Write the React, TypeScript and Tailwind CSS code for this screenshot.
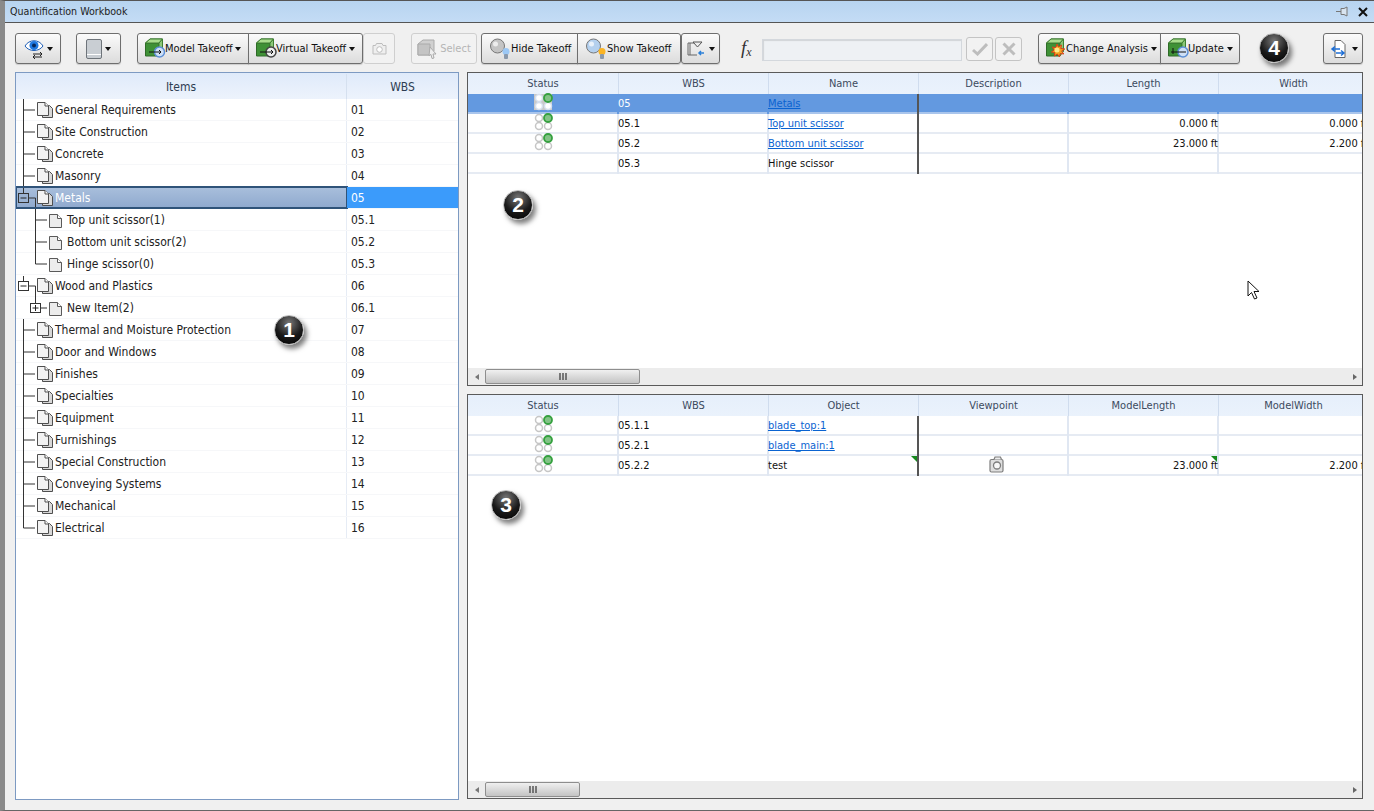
import React from "react";

const Caret = () => <span className="ml-[3px] inline-block h-0 w-0 shrink-0 border-x-[3.5px] border-t-[4px] border-x-transparent border-t-[#111]" />;

const Label = ({ children }: { children: React.ReactNode }) => <span className="mt-[2px] whitespace-nowrap">{children}</span>;

const Doc = ({ x, y, stack }: { x: number; y: number; stack?: boolean }) => (
  <g transform={`translate(${x} ${y})`} stroke="#4f4f4f" strokeWidth="1">
    {stack && <path d="M5.500 3.500H12.500L15.500 6.500V15.500H5.500z" fill="#d8d8d8" />}
    <path d="M.5 .5H8L11.500 4V13.500H.5z" fill="#f3f3f3" />
    <path d="M8 .5V4H11.500" fill="#fff" />
  </g>
);

const DocSingle = ({ x, y }: { x: number; y: number }) => (
  <g transform={`translate(${x} ${y})`} stroke="#5a5a5a" strokeWidth="1">
    <path d="M.5 .5H8.500L12.500 4.500V13.500H.5z" fill="#ececec" />
    <path d="M8.500 .5V4.500H12.500" fill="#fff" />
  </g>
);

type RowDef = { name: string; wbs: string; level: 0 | 1; lines: string; box?: "minus" | "plus"; selected?: boolean };

const L0 = "M7.500 0V22M7.500 11H19";
const rows: RowDef[] = [
  { name: "General Requirements", wbs: "01", level: 0, lines: L0 },
  { name: "Site Construction", wbs: "02", level: 0, lines: L0 },
  { name: "Concrete", wbs: "03", level: 0, lines: L0 },
  { name: "Masonry", wbs: "04", level: 0, lines: L0 },
  { name: "Metals", wbs: "05", level: 0, lines: "M7.500 0V6M12 11H19.500V22", box: "minus", selected: true },
  { name: "Top unit scissor(1)", wbs: "05.1", level: 1, lines: "M19.500 0V22M19.500 11H31" },
  { name: "Bottom unit scissor(2)", wbs: "05.2", level: 1, lines: "M19.500 0V22M19.500 11H31" },
  { name: "Hinge scissor(0)", wbs: "05.3", level: 1, lines: "M19.500 0V11H31" },
  { name: "Wood and Plastics", wbs: "06", level: 0, lines: "M7.500 1V6M12 11H19.500V22", box: "minus" },
  { name: "New Item(2)", wbs: "06.1", level: 1, lines: "M19.500 0V6M24 11H31", box: "plus" },
  { name: "Thermal and Moisture Protection", wbs: "07", level: 0, lines: L0 },
  { name: "Door and Windows", wbs: "08", level: 0, lines: L0 },
  { name: "Finishes", wbs: "09", level: 0, lines: L0 },
  { name: "Specialties", wbs: "10", level: 0, lines: L0 },
  { name: "Equipment", wbs: "11", level: 0, lines: L0 },
  { name: "Furnishings", wbs: "12", level: 0, lines: L0 },
  { name: "Special Construction", wbs: "13", level: 0, lines: L0 },
  { name: "Conveying Systems", wbs: "14", level: 0, lines: L0 },
  { name: "Mechanical", wbs: "15", level: 0, lines: L0 },
  { name: "Electrical", wbs: "16", level: 0, lines: "M7.500 0V11H19" },
];

function TreeGlyph({ r }: { r: RowDef }) {
  const w = r.level === 0 ? 39 : 51;
  const cx = r.level === 0 ? 7.5 : 19.5;
  return (
    <svg width={w} height={22} className="shrink-0">
      <path d={r.lines} stroke="#333" strokeWidth="1" fill="none" />
      {r.box && (
        <g>
          <rect x={cx - 5} y={6.5} width={10} height={9} fill={r.selected ? "#9bb3d3" : "#fff"} stroke="#333" />
          <path d={`M${cx - 3} 11H${cx + 3}`} stroke="#222" />
          {r.box === "plus" && <path d={`M${cx} 8V14`} stroke="#222" />}
        </g>
      )}
      {r.level === 0 ? <Doc x={21} y={3} stack /> : <DocSingle x={33} y={5} />}
    </svg>
  );
}

function TreeRow({ r }: { r: RowDef }) {
  return (
    <div className="flex h-[22px] border-b border-[#f6f7f9]">
      <div className={`flex w-[331px] items-center border-r border-[#e6ecf5] text-[12px] ${r.selected ? "bg-gradient-to-b from-[#a9bfdc] to-[#8fa9ce] text-white outline-2 -outline-offset-1 outline-[#2f5379]" : "text-[#222]"}`}>
        <TreeGlyph r={r} />
        <span className="whitespace-nowrap">{r.name}</span>
      </div>
      <div className={`flex flex-1 items-center pl-[4px] text-[12px] ${r.selected ? "bg-[#3b9bfb] text-white" : "text-[#222]"}`}>{r.wbs}</div>
    </div>
  );
}

function Lights({ on }: { on?: boolean }) {
  const st = on ? "#d4dfee" : "#c6c6c6";
  return (
    <svg width="20" height="18" className="-mt-[4px]">
      {on && <rect x="1" y="1" width="18" height="16" fill="#c9c9c9" />}
      <circle cx="6" cy="5" r="3.500" fill="#fff" stroke={st} strokeWidth="1.500" />
      <circle cx="6" cy="13" r="3.500" fill="#fff" stroke={st} strokeWidth="1.500" />
      <circle cx="15" cy="13" r="3.500" fill="#fff" stroke={st} strokeWidth="1.500" />
      <circle cx="15" cy="5" r="4" fill="#83c386" stroke="#35a03f" strokeWidth="1.800" />
    </svg>
  );
}

const Camera = ({ c = "#7d7d7d", big }: { c?: string; big?: boolean }) =>
  big ? (
    <svg width="15" height="17" viewBox="0 0 15 17" className="ml-[6px] -mt-[3px]">
      <rect x="1" y="3.500" width="13" height="12.500" rx="1.500" fill="#dedede" stroke={c} strokeWidth="1.200" />
      <path d="M5 3.500L6 1H11.500L12.500 3.500" fill="#ececec" stroke={c} strokeWidth="1.200" />
      <circle cx="8" cy="9.500" r="3.500" fill="#f7f7f7" stroke={c} strokeWidth="1.300" />
    </svg>
  ) : (
    <svg width="15" height="13" viewBox="0 0 15 13">
      <path d="M1 3.500H3.500L4.500 1.500H10L11 3.500H14V12H1z" fill="#efefef" stroke={c} />
      <circle cx="7.500" cy="7.500" r="2.800" fill="#fff" stroke={c} />
    </svg>
  );

type Cell = { t?: string; link?: boolean; right?: boolean; center?: React.ReactNode; tick?: boolean };

function GridRow({ cells, selected, frozen = 3 }: { cells: Cell[]; selected?: boolean; frozen?: number }) {
  return (
    <div className={`flex h-[20px] w-[901px] border-b-2 ${selected ? "border-[#a9c5ec] bg-[#6399e0] text-white" : "border-[#e6ebf3] bg-white text-[#111]"}`}>
      {cells.map((c, i) => (
        <div
          key={i}
          className={`relative flex h-[20px] shrink-0 items-center overflow-visible border-r-2 text-[11px] whitespace-nowrap ${i === 0 ? "w-[151px]" : "w-[150px]"} ${i === frozen - 1 ? "border-[#555]" : selected ? "border-[#6399e0]" : "border-[#e0e7f2]"} ${c.right ? "justify-end" : c.center ? "justify-center" : ""}`}
        >
          {c.center}
          {c.t && (
            <span className={`${c.link ? "text-[#0a63d1] underline" : ""} ${c.right ? "-mr-px" : "-ml-px"}`}>{c.t}</span>
          )}
          {c.tick && <span className="absolute top-0 right-0 h-0 w-0 border-t-[6px] border-l-[6px] border-t-[#178a1e] border-l-transparent" />}
        </div>
      ))}
    </div>
  );
}

function GridHeader({ labels }: { labels: string[] }) {
  return (
    <div className="flex h-[21px] w-[901px] shrink-0 bg-gradient-to-b from-[#e6effb] to-[#eaf2fc]">
      {labels.map((l, i) => (
        <div key={l} className={`flex shrink-0 items-center justify-center border-r border-[#cfdcee] pt-[2px] text-[11px] text-[#3c4a5e] ${i === 0 ? "w-[151px]" : "w-[150px]"}`}>{l}</div>
      ))}
    </div>
  );
}

function HScroll({ thumb }: { thumb: string }) {
  return (
    <div className="flex h-[17px] shrink-0 items-center bg-[#ececec] pl-[7px] pr-[5px]">
      <span className="h-0 w-0 border-y-[3.5px] border-r-[4px] border-y-transparent border-r-[#777]" />
      <div className={`ml-[6px] flex h-[15px] ${thumb} items-center justify-center rounded-[2px] border border-[#8e8e8e] bg-gradient-to-b from-[#f0f0f0] to-[#c4c4c4]`}>
        <svg width="8" height="7"><path d="M1 0v7M4 0v7M7 0v7" stroke="#555" strokeWidth="1.500" /></svg>
      </div>
      <span className="ml-auto h-0 w-0 border-y-[3.5px] border-l-[4px] border-y-transparent border-l-[#666]" />
    </div>
  );
}

const Badge = ({ n, cls }: { n: number; cls: string }) => (
  <div className={`absolute flex h-[30px] w-[30px] items-center justify-center rounded-full border border-[#bbb] bg-[radial-gradient(circle_at_50%_25%,#777,#1a1a1a_55%,#000)] font-['Liberation_Sans',sans-serif] text-[21px] font-bold text-white shadow-[3px_4px_5px_rgba(0,0,0,0.5)] ${cls}`}>{n}</div>
);

const Overlay = {
  plus: (
    <g>
      <circle cx="14.500" cy="14" r="5" fill="#cfe0f6" stroke="#5d8fd6" strokeWidth="1.500" />
      <path d="M4 14H16M14 12l2 2-2 2" stroke="#111" fill="none" />
    </g>
  ),
  ball: (
    <g>
      <circle cx="15" cy="14" r="5" fill="#eee" stroke="#444" strokeWidth="1.500" />
      <path d="M4 14H17M15 12l2 2-2 2" stroke="#111" fill="none" />
    </g>
  ),
  burst: (
    <g>
      <path d="M11 6l1.500 3 3-2-.7 3.500 4 .5-3.200 2 2.200 3-3.600-.5-.7 3.500-2.200-3-3 2 .5-3.500-3.500-.5 3-2-2-3 3.500.7z" fill="#f3a61d" stroke="#d8401a" />
      <circle cx="11" cy="12" r="2.500" fill="#ffe98a" />
    </g>
  ),
  update: (
    <g>
      <circle cx="15" cy="14" r="5" fill="#cfe0f6" stroke="#5d8fd6" strokeWidth="1.500" />
      <path d="M3 14H18M5 10v6" stroke="#111" fill="none" />
    </g>
  ),
};

function Cube({ kind }: { kind: keyof typeof Overlay }) {
  return (
    <svg width="22" height="21" viewBox="0 0 22 21" className="-mr-[2px] shrink-0 overflow-visible">
      <path d="M.5 5L5 1H17.500V13L14 17H.5z" fill="#4b9a3b" stroke="#2f6a28" />
      <path d="M.5 5H14V18H.5z" fill="#3f9136" stroke="#2f6a28" />
      <path d="M.5 5L5 1H17.500L14 5z" fill="#a9dc8e" stroke="#3f7f33" />
      <path d="M14 5L17.500 1V13L14 18z" fill="#8cc878" stroke="#3f7f33" />
      {Overlay[kind]}
    </svg>
  );
}

const btn = "flex h-[31px] items-center border border-[#6e6e6e] bg-gradient-to-b from-[#fbfbfb] to-[#dcdcdc] text-[11px] text-[#111] shadow-[0_1px_1px_rgba(0,0,0,0.15)]";
const disabled = "flex h-[31px] items-center justify-center rounded-[3px] border border-[#cfcfcf] bg-[#f2f2f2] text-[11px] text-[#b5b5b5]";

const Bulb = ({ color, tip }: { color: string; tip: string }) => (
  <svg width="22" height="22" viewBox="0 0 22 22" className="shrink-0">
    <circle cx="8.500" cy="8" r="7" fill={color} stroke="#777" />
    <circle cx="6.500" cy="6" r="2.500" fill="#fff" opacity=".7" />
    <circle cx="17" cy="13.500" r="3.500" fill={tip} />
    <rect x="15" y="16" width="4" height="5" rx="1" fill="#8a99ab" />
  </svg>
);

const sCells = (wbs: string, name: string, link: boolean, len: string, wid: string, lights: boolean, on?: boolean): Cell[] => [
  { center: lights ? <Lights on={on} /> : undefined },
  { t: wbs },
  { t: name, link },
  {},
  { t: len, right: true },
  { t: wid, right: true },
];

export default function App() {
  return (
    <div className="relative flex h-[811px] w-[1374px] flex-col overflow-hidden border-t border-b border-l-[5px] border-t-[#555] border-b-[#666] border-l-[#8a8a8a] bg-[#f0f0f0] font-['DejaVu_Sans',sans-serif] [font-stretch:condensed]">
      <div className="flex h-[22px] shrink-0 items-center justify-between border-b border-[#555] bg-gradient-to-b from-[#b7d4f0] to-[#c4dcf5] pr-[6px] pl-[5px] text-[10.6px] text-[#222]">
        <span className="mt-[1px]">Quantification Workbook</span>
        <div className="flex items-center gap-[9px]">
          <svg width="13" height="11" viewBox="0 0 13 11"><path d="M0 5.500H5M5 2.500H8L11 1V10L8 8.500H5z" fill="#d8e4f0" stroke="#777" /></svg>
          <svg width="10" height="10" viewBox="0 0 10 10"><path d="M1 1L9 9M9 1L1 9" stroke="#111" strokeWidth="2" /></svg>
        </div>
      </div>

      <div className="flex h-[49px] shrink-0 items-start pt-[10px] pl-[10px]">
        <div className={`${btn} w-[46px] justify-center rounded-[3px]`}>
          <svg width="20" height="22" viewBox="0 0 20 22">
            <path d="M1 8C5 1 15 1 19 8C15 14 5 14 1 8z" fill="#fff" stroke="#1f5fb8" />
            <circle cx="10" cy="7.500" r="4.500" fill="#1f78e0" />
            <circle cx="10" cy="7.500" r="2" fill="#06275a" />
            <path d="M9 16H18M16 14l2 2-2 2M18 19H9M11 17l-2 2 2 2" stroke="#222" fill="none" />
          </svg>
          <Caret />
        </div>
        <div className={`${btn} ml-[15px] w-[45px] justify-center rounded-[3px]`}>
          <svg width="16" height="20" viewBox="0 0 16 20">
            <rect x=".5" y=".5" width="15" height="19" rx="1.500" fill="#c9ced3" stroke="#6e747a" />
            <path d="M1 15.500H15" stroke="#fff" />
          </svg>
          <Caret />
        </div>
        <div className={`${btn} ml-[16px] w-[112px] rounded-l-[3px] pl-[7px]`}><Cube kind="plus" /><Label>Model Takeoff</Label><Caret /></div>
        <div className={`${btn} -ml-px w-[115px] rounded-r-[3px] pl-[7px]`}><Cube kind="ball" /><Label>Virtual Takeoff</Label><Caret /></div>
        <div className={`${disabled} w-[32px]`}><Camera c="#bdbdbd" /></div>
        <div className={`${disabled} ml-[16px] w-[66px] gap-[1px]`}>
          <svg width="22" height="22" viewBox="0 0 22 22"><path d="M1 6L6 2H17V13L13 17H1z" fill="#d0d0d0" stroke="#aaa" /><path d="M1 6H13V17H1z" fill="#c4c4c4" stroke="#aaa" /><path d="M13 9l6 7-3 0 1 4-2 .5-1-4-2 1z" fill="#eee" stroke="#aaa" /></svg>
          <Label>Select</Label>
        </div>
        <div className={`${btn} ml-[4px] w-[97px] rounded-l-[3px] pl-[7px]`}><Bulb color="#c4c4c4" tip="#9cc8f5" /><Label>Hide Takeoff</Label></div>
        <div className={`${btn} -ml-px w-[104px] rounded-r-[3px] pl-[7px]`}><Bulb color="#b4d0ee" tip="#fbb423" /><Label>Show Takeoff</Label></div>
        <div className={`${btn} w-[39px] justify-center rounded-[3px]`}>
          <svg width="20" height="20" viewBox="0 0 20 20" fill="none">
            <path d="M2 4H4V16H2zM4 4H15M4 16H11" stroke="#666" />
            <path d="M7 3H16L11.500 8z" fill="#eee" stroke="#555" />
            <path d="M18 14H13M15 12l-2 2 2 2" stroke="#2a7fd8" strokeWidth="1.500" />
          </svg>
          <Caret />
        </div>
        <div className="ml-[21px] flex h-[31px] w-[21px] items-center font-['Liberation_Serif',serif] text-[19px] text-[#333] italic">f<sub className="text-[12px]">x</sub></div>
        <div className="mt-[6px] h-[22px] w-[200px] border border-[#d4d8dd] bg-[#eef1f4] shadow-[inset_1px_1px_1px_rgba(0,0,0,0.12)]" />
        <div className="mt-[4px] ml-[4px] flex h-[24px] w-[27px] items-center justify-center rounded-[3px] border border-[#c4c4c4] bg-[#f2f2f2]">
          <svg width="16" height="14" viewBox="0 0 16 14"><path d="M1 8L5.500 12L15 2" fill="none" stroke="#bdbdbd" strokeWidth="3" /></svg>
        </div>
        <div className="mt-[4px] ml-[2px] flex h-[24px] w-[27px] items-center justify-center rounded-[3px] border border-[#c4c4c4] bg-[#f2f2f2]">
          <svg width="14" height="14" viewBox="0 0 14 14"><path d="M1.500 1.500L12.500 12.500M12.500 1.500L1.500 12.500" stroke="#bdbdbd" strokeWidth="3" /></svg>
        </div>
        <div className={`${btn} ml-[16px] w-[123px] rounded-l-[3px] pl-[7px]`}><Cube kind="burst" /><Label>Change Analysis</Label><Caret /></div>
        <div className={`${btn} -ml-px w-[80px] rounded-r-[3px] pl-[7px]`}><Cube kind="update" /><Label>Update</Label><Caret /></div>
        <div className={`${btn} ml-[83px] w-[40px] justify-center rounded-[3px]`}>
          <svg width="20" height="20" viewBox="0 0 20 20" fill="none">
            <path d="M6 1.500H12L16 5.500V18.500H6z" fill="#fff" stroke="#666" />
            <path d="M3 10H11M6 7.500l-3 2.500 3 2.500M7 14H15M12 11.500l3 2.500-3 2.500" stroke="#1e6fd6" strokeWidth="1.500" />
          </svg>
          <Caret />
        </div>
      </div>

      <div className="flex flex-1 gap-[8px] pl-[10px]">
        <div className="h-[728px] w-[444px] overflow-hidden border border-[#7d9ac2] bg-white">
          <div className="flex h-[26px] bg-gradient-to-b from-[#dfeafa] to-[#edf3fc] pt-[1px] text-[12px] font-medium text-[#2e3d52]">
            <div className="flex w-[331px] items-center justify-center border-r border-[#d5e0ef]">Items</div>
            <div className="flex flex-1 items-center justify-center">WBS</div>
          </div>
          {rows.map((r) => <TreeRow key={r.name} r={r} />)}
        </div>

        <div className="flex w-[896px] flex-col gap-[8px]">
          <div className="flex h-[314px] flex-col overflow-hidden border border-[#5a5a5a] bg-white">
            <GridHeader labels={["Status", "WBS", "Name", "Description", "Length", "Width"]} />
            <GridRow selected cells={sCells("05", "Metals", true, "", "", true, true)} />
            <GridRow cells={sCells("05.1", "Top unit scissor", true, "0.000 ft", "0.000 ft", true)} />
            <GridRow cells={sCells("05.2", "Bottom unit scissor", true, "23.000 ft", "2.200 ft", true)} />
            <GridRow cells={sCells("05.3", "Hinge scissor", false, "", "", false)} />
            <div className="flex-1" />
            <HScroll thumb="w-[155px]" />
          </div>
          <div className="flex h-[405px] flex-col overflow-hidden border border-[#5a5a5a] bg-white">
            <GridHeader labels={["Status", "WBS", "Object", "Viewpoint", "ModelLength", "ModelWidth"]} />
            <GridRow cells={sCells("05.1.1", "blade_top:1", true, "", "", true)} />
            <GridRow cells={sCells("05.2.1", "blade_main:1", true, "", "", true)} />
            <GridRow
              cells={[
                { center: <Lights /> },
                { t: "05.2.2" },
                { t: "test", tick: true },
                { center: <Camera big /> },
                { t: "23.000 ft", right: true, tick: true },
                { t: "2.200 ft", right: true },
              ]}
            />
            <div className="flex-1" />
            <HScroll thumb="w-[95px]" />
          </div>
        </div>
      </div>

      <Badge n={1} cls="left-[269px] top-[314px]" />
      <Badge n={2} cls="left-[498px] top-[189px]" />
      <Badge n={3} cls="left-[486px] top-[489px]" />
      <Badge n={4} cls="left-[1254px] top-[32px]" />
      <svg width="13" height="20" viewBox="0 0 13 20" className="absolute top-[279px] left-[1242px]">
        <path d="M1 1V16L4.500 12.500L7.500 19L10 18L7 11.500H12z" fill="#fff" stroke="#111" />
      </svg>
    </div>
  );
}
